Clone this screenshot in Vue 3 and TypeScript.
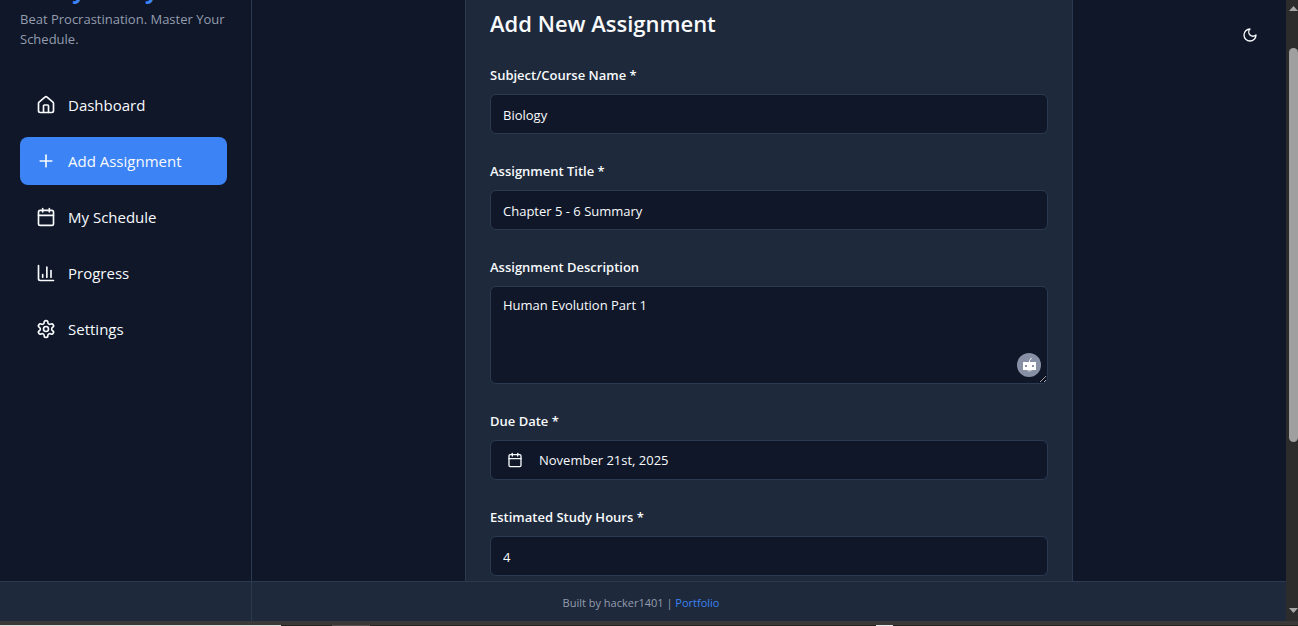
<script setup lang="ts">
import { ref } from 'vue'

interface NavItem {
  label: string
  icon: string[]
}

const navItems: NavItem[] = [
  {
    label: 'Dashboard',
    icon: [
      'M15 21v-8a1 1 0 0 0-1-1h-4a1 1 0 0 0-1 1v8',
      'M3 10a2 2 0 0 1 .709-1.528l7-5.999a2 2 0 0 1 2.582 0l7 5.999A2 2 0 0 1 21 10v9a2 2 0 0 1-2 2H5a2 2 0 0 1-2-2z',
    ],
  },
  { label: 'Add Assignment', icon: ['M5 12h14', 'M12 5v14'] },
  {
    label: 'My Schedule',
    icon: ['M8 2v4', 'M16 2v4', 'M5 4h14a2 2 0 0 1 2 2v14a2 2 0 0 1-2 2H5a2 2 0 0 1-2-2V6a2 2 0 0 1 2-2z', 'M3 10h18'],
  },
  {
    label: 'Progress',
    icon: ['M3 3v16a2 2 0 0 0 2 2h16', 'M18 17V9', 'M13 17V5', 'M8 17v-3'],
  },
  {
    label: 'Settings',
    icon: [
      'M12.22 2h-.44a2 2 0 0 0-2 2v.18a2 2 0 0 1-1 1.73l-.43.25a2 2 0 0 1-2 0l-.15-.08a2 2 0 0 0-2.73.73l-.22.38a2 2 0 0 0 .73 2.73l.15.1a2 2 0 0 1 1 1.72v.51a2 2 0 0 1-1 1.74l-.15.09a2 2 0 0 0-.73 2.73l.22.38a2 2 0 0 0 2.73.73l.15-.08a2 2 0 0 1 2 0l.43.25a2 2 0 0 1 1 1.73V20a2 2 0 0 0 2 2h.44a2 2 0 0 0 2-2v-.18a2 2 0 0 1 1-1.73l.43-.25a2 2 0 0 1 2 0l.15.08a2 2 0 0 0 2.73-.73l.22-.39a2 2 0 0 0-.73-2.73l-.15-.08a2 2 0 0 1-1-1.74v-.5a2 2 0 0 1 1-1.74l.15-.09a2 2 0 0 0 .73-2.73l-.22-.38a2 2 0 0 0-2.73-.73l-.15.08a2 2 0 0 1-2 0l-.43-.25a2 2 0 0 1-1-1.73V4a2 2 0 0 0-2-2z',
      'M12 9a3 3 0 1 0 0 6 3 3 0 1 0 0-6z',
    ],
  },
]

const active = ref('Add Assignment')
const subject = ref('Biology')
const title = ref('Chapter 5 - 6 Summary')
const description = ref('Human Evolution Part 1')
const dueDate = ref('November 21st, 2025')
const hours = ref('4')
</script>

<template>
  <div class="screen">
    <div class="viewport">
      <div class="app">
        <aside class="sidebar">
          <h1 class="brand">StudyBuddy</h1>
          <p class="tagline">Beat Procrastination. Master Your Schedule.</p>
          <nav class="nav">
            <a
              v-for="item in navItems"
              :key="item.label"
              href="#"
              class="nav-link"
              :class="{ active: item.label === active }"
              @click.prevent="active = item.label"
            >
              <svg class="icon" viewBox="0 0 24 24" aria-hidden="true">
                <path v-for="d in item.icon" :key="d" :d="d" />
              </svg>
              <span>{{ item.label }}</span>
            </a>
          </nav>
        </aside>

        <main class="main">
          <button type="button" class="theme" aria-label="Toggle theme">
            <svg class="icon small" viewBox="0 0 24 24" aria-hidden="true">
              <path d="M12 3a6 6 0 0 0 9 9 9 9 0 1 1-9-9Z" />
            </svg>
          </button>
          <form class="card" @submit.prevent>
            <h2 class="heading">Add New Assignment</h2>
            <div class="field">
              <label for="subject">Subject/Course Name *</label>
              <input id="subject" v-model="subject" class="control" type="text" />
            </div>
            <div class="field">
              <label for="title">Assignment Title *</label>
              <input id="title" v-model="title" class="control" type="text" />
            </div>
            <div class="field">
              <label for="description">Assignment Description</label>
              <div class="area">
                <textarea id="description" v-model="description" class="control"></textarea>
                <button type="button" class="assistant" aria-label="Writing assistant">
                  <svg viewBox="0 0 24 24" aria-hidden="true">
                    <path class="face" d="M6 9h13v8H6z" />
                    <path class="jaw" d="M10 17h5l-1 1.500h-3z" />
                    <path class="antenna" d="M12.500 9V7.500l2-2.500" />
                    <path class="eye" d="M8 12h2v2H8zM15 12h2v2h-2z" />
                  </svg>
                </button>
              </div>
            </div>
            <div class="field">
              <label for="due">Due Date *</label>
              <button id="due" type="button" class="control date">
                <svg class="icon small" viewBox="0 0 24 24" aria-hidden="true">
                  <path v-for="d in navItems[2].icon" :key="d" :d="d" />
                </svg>
                <span>{{ dueDate }}</span>
              </button>
            </div>
            <div class="field">
              <label for="hours">Estimated Study Hours *</label>
              <input id="hours" v-model="hours" class="control" type="text" inputmode="numeric" />
            </div>
          </form>
        </main>

        <footer class="footer">
          <p>Built by hacker1401 | <a href="#">Portfolio</a></p>
        </footer>
      </div>

      <div class="scrollbar" aria-hidden="true">
        <i class="arrow up"></i>
        <div class="thumb"></div>
        <i class="arrow down"></i>
      </div>
    </div>
    <div class="taskbar" aria-hidden="true">
      <div class="task light"></div>
      <div class="task gap-a"></div>
      <div class="task mid"></div>
      <div class="task gap-b"></div>
      <div class="task light-small"></div>
      <div class="task rest"></div>
    </div>
  </div>
</template>

<style>
body {
  margin: 0;
  background: #0f1729;
}
</style>

<style scoped>
* {
  box-sizing: border-box;
}
.screen {
  display: flex;
  flex-direction: column;
  height: 100vh;
  overflow: hidden;
  background: #0f1729;
  color: #f8fafc;
  font-family: "Open Sans", "Noto Sans", sans-serif;
  font-size: 13px;
  line-height: 20px;
}
.viewport {
  display: flex;
  flex: 1;
  min-height: 0;
}
.app {
  display: grid;
  flex: 1;
  grid-template-columns: 252px 1fr;
  grid-template-rows: minmax(0, 1fr) 40px;
  min-width: 0;
}
.sidebar {
  z-index: 1;
  grid-row: 1 / 3;
  grid-column: 1;
  min-height: 0;
  padding: 0 24px 0 20px;
  overflow: hidden;
  border-right: 1px solid #2b3a51;
}
.brand {
  margin: -27px 0 4px;
  color: #3c83f6;
  font-size: 23px;
  font-weight: 700;
  line-height: 32px;
}
.tagline {
  margin: 0 -8px 32px 0;
  color: #949dae;
}
.nav {
  display: flex;
  flex-direction: column;
  gap: 8px;
}
.nav-link {
  display: flex;
  align-items: center;
  gap: 12px;
  height: 48px;
  padding: 0 16px;
  border-radius: 8px;
  color: #f8fafc;
  font-size: 15px;
  font-weight: 500;
  text-decoration: none;
}
.nav-link.active {
  background: #3c83f6;
}
.icon {
  flex: none;
  width: 20px;
  height: 20px;
  fill: none;
  stroke: currentColor;
  stroke-width: 2;
  stroke-linecap: round;
  stroke-linejoin: round;
}
.icon.small {
  width: 16px;
  height: 16px;
}
.main {
  position: relative;
  display: flex;
  grid-row: 1;
  grid-column: 2;
  justify-content: center;
  min-height: 0;
  overflow: hidden;
}
.theme {
  position: absolute;
  top: 15px;
  right: 16px;
  display: grid;
  width: 40px;
  height: 40px;
  padding: 0;
  place-items: center;
  border: 0;
  background: transparent;
  color: #f8fafc;
}
.card {
  display: flex;
  flex: 0 1 608px;
  flex-direction: column;
  gap: 24px;
  height: max-content;
  padding: 6px 24px 24px;
  border: solid #2b3a51;
  border-width: 0 1px;
  background: #1e293b;
}
.heading {
  margin: 0;
  padding-top: 2px;
  font-size: 22px;
  font-weight: 600;
  line-height: 30px;
}
.field {
  display: flex;
  flex-direction: column;
  gap: 6px;
}
.field label {
  font-weight: 600;
  line-height: 26px;
}
.control {
  display: block;
  width: 100%;
  height: 40px;
  margin: 0;
  padding: 2px 12px 0;
  border: 1px solid #2b3a51;
  border-radius: 6px;
  outline: 0;
  background: #0f1729;
  color: #f8fafc;
  font: inherit;
}
.area {
  position: relative;
}
textarea.control {
  height: 98px;
  padding: 8px 12px;
  resize: vertical;
}
.assistant {
  position: absolute;
  right: 7px;
  bottom: 7px;
  width: 24px;
  height: 24px;
  padding: 0;
  border: 0;
  border-radius: 50%;
  background: #8790a5;
}
.assistant svg {
  display: block;
  width: 24px;
  height: 24px;
}
.face {
  fill: #ffffff;
}
.jaw {
  fill: #c3c8d2;
}
.antenna {
  fill: none;
  stroke: #ffffff;
  stroke-width: 1;
}
.eye {
  fill: #8790a5;
}
.control.date {
  display: flex;
  align-items: center;
  gap: 16px;
  padding: 0 16px;
  text-align: left;
}
.footer {
  display: grid;
  grid-row: 2;
  grid-column: 1 / 3;
  place-items: center;
  border-top: 1px solid #2b3a51;
  background: #1e293b;
  color: #949dae;
  font-size: 11px;
  line-height: 16px;
}
.footer p {
  margin: 2px 4px 0 0;
}
.footer a {
  color: #3c83f6;
  text-decoration: none;
}
.scrollbar {
  display: grid;
  flex: none;
  grid-template-rows: 48fr 394fr 179fr;
  width: 12px;
  padding-left: 3px;
  background: #2c2c2c;
}
.thumb {
  border-radius: 5px;
  background: #9f9f9f;
}
.arrow {
  display: block;
  width: 9px;
  height: 5px;
  background: #a5a5a5;
}
.up {
  align-self: start;
  margin-top: 6px;
  clip-path: polygon(50% 0, 100% 100%, 0 100%);
}
.down {
  align-self: end;
  margin-bottom: 8px;
  clip-path: polygon(0 0, 100% 0, 50% 100%);
}
.taskbar {
  display: flex;
  flex: none;
  align-items: flex-end;
  height: 5px;
  background: #3a3838;
}
.task {
  height: 1px;
}
.light {
  flex: 0 0 281px;
  background: #d8d8d8;
}
.gap-a {
  flex: 0 0 51px;
  background: #252222;
}
.mid {
  flex: 0 0 38px;
  background: #555050;
}
.gap-b {
  flex: 0 0 506px;
  background: #252222;
}
.light-small {
  flex: 0 0 17px;
  background: #e8e8e8;
}
.rest {
  flex: 1;
  background: #252222;
}
</style>
